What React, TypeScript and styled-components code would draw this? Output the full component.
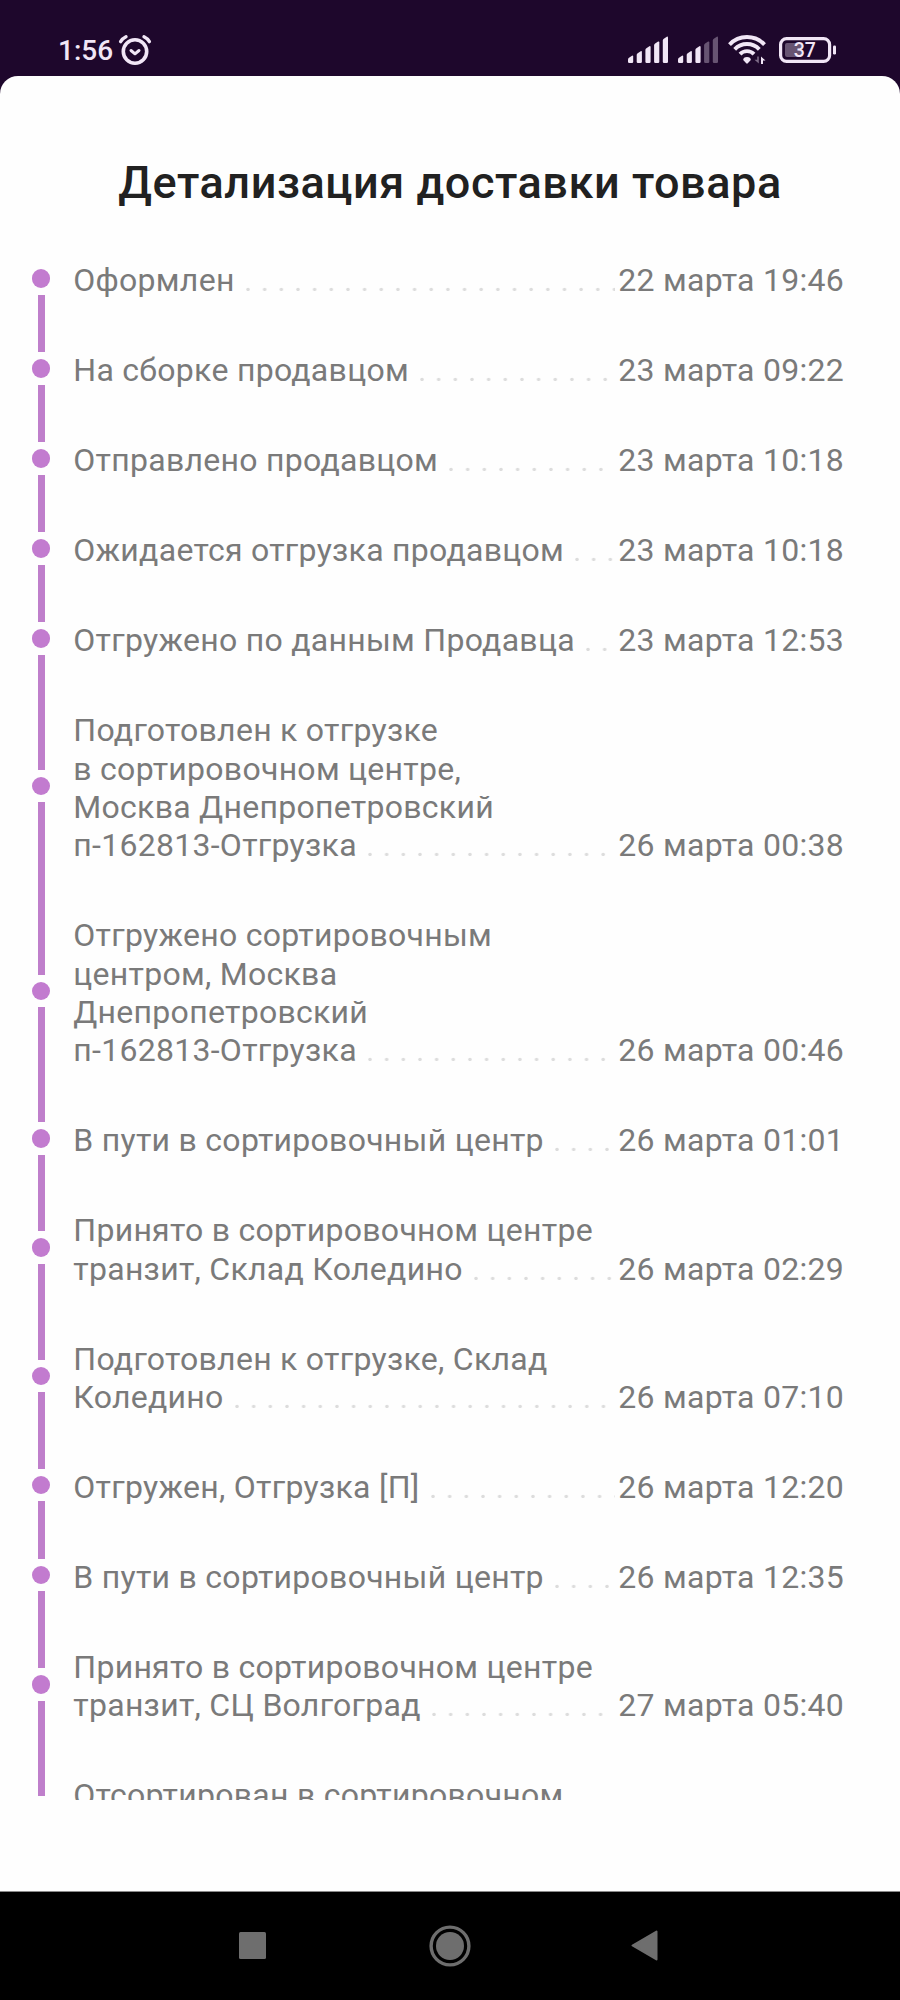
import React from "react";
import styled, { createGlobalStyle } from "styled-components";

const GlobalStyle = createGlobalStyle`
  * { box-sizing: border-box; }
  body { margin: 0; background: #1e072c; font-family: Roboto, "Liberation Sans", sans-serif; }
`;

const Screen = styled.div`
  width: 900px;
  height: 2000px;
  display: flex;
  flex-direction: column;
  overflow: hidden;
  background: #1e072c;
`;

const StatusBar = styled.header`
  flex: none;
  height: 75.5px;
  padding: 24px 63px 0 58px;
  display: flex;
  justify-content: space-between;
  align-items: center;
  color: #f1e6f6;
`;

const Cluster = styled.div`
  display: flex;
  align-items: center;
`;

const Clock = styled.span`
  padding-top: 2px;
  font-size: 28px;
  line-height: 34px;
  font-weight: 500;
`;

const AlarmSvg = styled.svg`
  margin-left: 4.5px;
`;

const WifiSvg = styled.svg`
  margin: 0 2px 0 0.5px;
`;

const Sheet = styled.main`
  flex: none;
  height: 1816px;
  display: flex;
  flex-direction: column;
  background: #fefefe;
  border-radius: 18px 18px 0 0;
  border-bottom: 1px solid #8a8a8a;
`;

const Title = styled.h1`
  flex: none;
  margin: 78px 0 0;
  height: 58px;
  line-height: 58px;
  text-align: center;
  font-size: 45px;
  font-weight: 500;
  letter-spacing: 0.56px;
  white-space: nowrap;
  color: #212121;
`;

const Timeline = styled.ol`
  list-style: none;
  margin: 22.2px 0 0;
  padding: 0;
  height: 1566.3px;
  overflow: hidden;
`;

const Step = styled.li`
  display: flex;
  padding-left: 31.6px;
`;

const Rail = styled.div`
  width: 19px;
  display: flex;
  flex-direction: column;
  align-items: center;
  gap: 7px;
`;

const Segment = styled.div<{ $hidden?: boolean }>`
  flex: 1;
  width: 7px;
  background: ${(p) => (p.$hidden ? "transparent" : "#bf7fcb")};
`;

const Dot = styled.div`
  flex: none;
  width: 18.6px;
  height: 18.6px;
  border-radius: 50%;
  background: #c27bcf;
`;

const StepBody = styled.div`
  width: 770.8px;
  margin-left: 22.7px;
  padding: 27.75px 0 23.91px;
  display: flex;
  flex-direction: column;
  font-size: 32px;
  line-height: 38.33px;
  letter-spacing: 0.28px;
  white-space: nowrap;
  color: #7a7a7a;
`;

const LastLine = styled.div`
  display: flex;
`;

const Leader = styled.span`
  flex: 1;
  margin: 0 3px 0 11px;
  height: 38.33px;
  background: radial-gradient(circle at 2px 28.7px, #dcdcdc 1.3px, transparent 2.1px) repeat-x;
  background-size: 16.67px 38.33px;
`;

const NavBar = styled.nav`
  flex: 1;
  background: #000;
  display: flex;
  align-items: center;
  justify-content: space-between;
  padding: 0 242px 0 239px;
`;

const HomeSvg = styled.svg`
  margin: 1px 0 0 3px;
`;

const steps: { lines: string[]; date: string }[] = [
  { lines: ["Оформлен"], date: "22 марта 19:46" },
  { lines: ["На сборке продавцом"], date: "23 марта 09:22" },
  { lines: ["Отправлено продавцом"], date: "23 марта 10:18" },
  { lines: ["Ожидается отгрузка продавцом"], date: "23 марта 10:18" },
  { lines: ["Отгружено по данным Продавца"], date: "23 марта 12:53" },
  { lines: ["Подготовлен к отгрузке", "в сортировочном центре,", "Москва Днепропетровский", "п-162813-Отгрузка"], date: "26 марта 00:38" },
  { lines: ["Отгружено сортировочным", "центром, Москва", "Днепропетровский", "п-162813-Отгрузка"], date: "26 марта 00:46" },
  { lines: ["В пути в сортировочный центр"], date: "26 марта 01:01" },
  { lines: ["Принято в сортировочном центре", "транзит, Склад Коледино"], date: "26 марта 02:29" },
  { lines: ["Подготовлен к отгрузке, Склад", "Коледино"], date: "26 марта 07:10" },
  { lines: ["Отгружен, Отгрузка [П]"], date: "26 марта 12:20" },
  { lines: ["В пути в сортировочный центр"], date: "26 марта 12:35" },
  { lines: ["Принято в сортировочном центре", "транзит, СЦ Волгоград"], date: "27 марта 05:40" },
  { lines: ["Отсортирован в сортировочном", ""], date: "" },
];

const AlarmIcon = () => (
  <AlarmSvg width="34" height="32" viewBox="0 0 34 32" fill="none" stroke="currentColor" strokeLinecap="round" strokeLinejoin="round">
    <circle cx="17" cy="17.5" r="11.7" strokeWidth="3.6" />
    <path d="M13 16.5 L17 19.8 L21 16.5" strokeWidth="3" />
    <path d="M2.6 7.6 Q4.5 4.5 8 2.8 M31.4 7.6 Q29.5 4.5 26 2.8" strokeWidth="3.4" />
  </AlarmSvg>
);

const SignalIcon = ({ level }: { level: number }) => (
  <svg width="40" height="27" viewBox="0 0 40 27" fill="currentColor">
    {[7.5, 12, 17, 21.7, 26.5].map((h, i) => {
      const x = i * 8.7;
      const top = 27 - h;
      return (
        <path
          key={h}
          opacity={i < level ? 1 : 0.35}
          d={`M${x} ${top + 4} Q${x} ${top + 3} ${x + 1} ${top + 2.2} L${x + 4} ${top + 0.2} Q${x + 5.2} ${top - 0.2} ${x + 5.2} ${top + 1} V25.8 Q${x + 5.2} 27 ${x + 4} 27 H${x + 1.2} Q${x} 27 ${x} 25.8 Z`}
        />
      );
    })}
  </svg>
);

const WifiIcon = () => (
  <WifiSvg width="39" height="30" viewBox="0 0 39 30" fill="none" stroke="currentColor" strokeWidth="3.9">
    <path d="M1.5 9.6 A24 24 0 0 1 36.5 9.6" />
    <path d="M6.7 14.3 A17 17 0 0 1 31.3 14.3" />
    <path d="M12 19.1 A9.8 9.8 0 0 1 26 19.1" />
    <path d="M15.2 25 Q15.2 22 19 22 Q22.8 22 22.8 25 L19.8 28.3 Q19 29 18.2 28.3 Z" fill="currentColor" stroke="none" />
    <path d="M30.8 21.5 V28.5 L26.5 24.8 L29.2 24.8 V21.5 Z" fill="currentColor" stroke="none" opacity="0.45" />
    <path d="M33 29 V21.5 L37.5 25.5 H35 V29 Z" fill="currentColor" stroke="none" />
  </WifiSvg>
);

const BatteryIcon = () => (
  <svg width="58" height="26" viewBox="0 0 58 26">
    <rect x="1.6" y="1.6" width="49" height="22.8" rx="6" fill="none" stroke="currentColor" strokeWidth="3.2" />
    <rect x="6" y="6" width="16" height="14" rx="2" fill="currentColor" opacity="0.35" />
    <rect x="54" y="8.5" width="3" height="9" rx="1.2" fill="currentColor" />
    <text x="25.8" y="20.1" textAnchor="middle" fontSize="19.5" fontWeight="500" fontFamily="Roboto" fill="currentColor">37</text>
  </svg>
);

const StatusIcons = styled(Cluster)`
  gap: 10px;
`;

export default function App() {
  return (
    <Screen>
      <GlobalStyle />
      <StatusBar>
        <Cluster>
          <Clock>1:56</Clock>
          <AlarmIcon />
        </Cluster>
        <StatusIcons>
          <SignalIcon level={5} />
          <SignalIcon level={3} />
          <WifiIcon />
          <BatteryIcon />
        </StatusIcons>
      </StatusBar>
      <Sheet>
        <Title>Детализация доставки товара</Title>
        <Timeline>
          {steps.map((step, i) => (
            <Step key={i}>
              <Rail>
                <Segment $hidden={i === 0} />
                <Dot />
                <Segment />
              </Rail>
              <StepBody>
                {step.lines.slice(0, -1).map((line) => (
                  <div key={line}>{line}</div>
                ))}
                <LastLine>
                  <span>{step.lines[step.lines.length - 1]}</span>
                  <Leader />
                  <span>{step.date}</span>
                </LastLine>
              </StepBody>
            </Step>
          ))}
        </Timeline>
      </Sheet>
      <NavBar>
        <svg width="27" height="27"><rect width="27" height="27" rx="1.5" fill="#6e6e6e" /></svg>
        <HomeSvg width="42" height="42">
          <circle cx="21" cy="21" r="18.9" fill="none" stroke="#6e6e6e" strokeWidth="3.4" />
          <circle cx="21" cy="21" r="14" fill="#6e6e6e" />
        </HomeSvg>
        <svg width="27" height="31">
          <path d="M1.5 15.5 L25.5 1.5 V29.5 Z" fill="#6e6e6e" stroke="#6e6e6e" strokeWidth="2" strokeLinejoin="round" />
        </svg>
      </NavBar>
    </Screen>
  );
}
